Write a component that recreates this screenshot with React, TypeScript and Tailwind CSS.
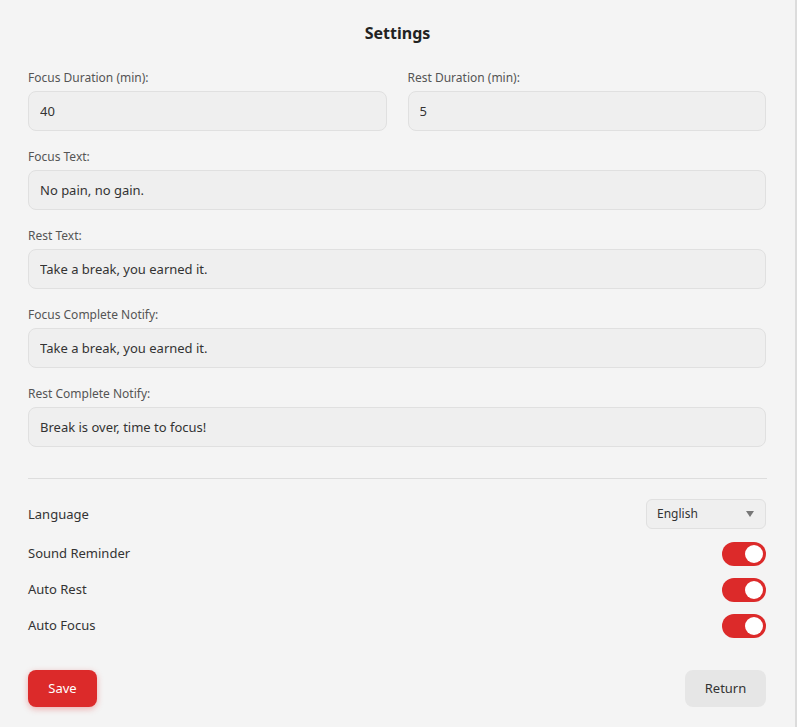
import React, {useState} from 'react';

type FieldProps = {
  label: string;
  value: string;
  onChange: (value: string) => void;
};

function Field({label, value, onChange}: FieldProps) {
  return (
    <div className="flex flex-1 flex-col">
      <label className="mb-[5px] text-[12px] leading-[16px] text-[#555]">{label}</label>
      <input
        className="h-[40px] w-full rounded-[8px] border border-[#e0e0e0] bg-[#efefef] px-[11px] text-[13px] text-[#333] outline-none"
        value={value}
        onChange={e => onChange(e.target.value)}
      />
    </div>
  );
}

function Toggle({checked, onChange}: {checked: boolean; onChange: (v: boolean) => void}) {
  return (
    <button
      onClick={() => onChange(!checked)}
      className={
        'flex h-[24px] w-[44px] items-center rounded-full px-[3px] ' +
        (checked ? 'justify-end bg-[#dc2a2a]' : 'justify-start bg-[#ccc]')
      }>
      <span className="h-[18px] w-[18px] rounded-full bg-white" />
    </button>
  );
}

export default function App() {
  const [settings, setSettings] = useState({
    focus: '40',
    rest: '5',
    focusText: 'No pain, no gain.',
    restText: 'Take a break, you earned it.',
    focusNotify: 'Take a break, you earned it.',
    restNotify: 'Break is over, time to focus!',
    language: 'en',
    sound: true,
    autoRest: true,
    autoFocus: true,
  });

  const set = (field: string, value: string | boolean) => {
    setSettings({...settings, [field]: value});
  };

  return (
    <div
      className="min-h-[727px] border-r-2 border-[#dcdcdc] bg-[#f4f4f4] px-[28px] pt-[22px]"
      style={{fontFamily: '"Noto Sans", "Open Sans", sans-serif'}}>
      <h1 className="text-center text-[16px] font-bold leading-[22px] text-[#222]">Settings</h1>

      <div className="mt-[26px] flex flex-col gap-[18px] pr-[1px]">
        <div className="flex gap-[21px]">
          <Field label="Focus Duration (min):" value={settings.focus} onChange={v => set('focus', v)} />
          <Field label="Rest Duration (min):" value={settings.rest} onChange={v => set('rest', v)} />
        </div>
        <Field label="Focus Text:" value={settings.focusText} onChange={v => set('focusText', v)} />
        <Field label="Rest Text:" value={settings.restText} onChange={v => set('restText', v)} />
        <Field
          label="Focus Complete Notify:"
          value={settings.focusNotify}
          onChange={v => set('focusNotify', v)}
        />
        <Field
          label="Rest Complete Notify:"
          value={settings.restNotify}
          onChange={v => set('restNotify', v)}
        />
      </div>

      <div className="mt-[31px] border-t border-[#dddddd] pr-[1px] pt-[20px]">
        <div className="flex h-[30px] items-center justify-between">
          <span className="pt-[2px] text-[13px] text-[#333]">Language</span>
          <div className="relative">
            <select
              value={settings.language}
              onChange={e => set('language', e.target.value)}
              className="h-[30px] w-[120px] appearance-none rounded-[6px] border border-[#e0e0e0] bg-[#efefef] px-[10px] text-[12px] text-[#333] outline-none">
              <option value="en">English</option>
              <option value="zh">中文</option>
            </select>
            <span className="pointer-events-none absolute right-[12px] top-[12px] h-0 w-0 border-x-[4px] border-t-[6px] border-x-transparent border-t-[#777]" />
          </div>
        </div>

        <div className="mt-[13px] flex h-[24px] items-center justify-between">
          <span className="text-[13px] text-[#333]">Sound Reminder</span>
          <Toggle checked={settings.sound} onChange={v => set('sound', v)} />
        </div>
        <div className="mt-[12px] flex h-[24px] items-center justify-between">
          <span className="text-[13px] text-[#333]">Auto Rest</span>
          <Toggle checked={settings.autoRest} onChange={v => set('autoRest', v)} />
        </div>
        <div className="mt-[12px] flex h-[24px] items-center justify-between">
          <span className="text-[13px] text-[#333]">Auto Focus</span>
          <Toggle checked={settings.autoFocus} onChange={v => set('autoFocus', v)} />
        </div>

        <div className="mt-[32px] flex items-center justify-between">
          <button className="h-[37px] w-[69px] rounded-[8px] bg-[#dc2a2a] text-[13px] text-white shadow-[0_2px_6px_rgba(220,42,42,0.35)]">
            Save
          </button>
          <button className="h-[37px] w-[81px] rounded-[8px] bg-[#e6e6e6] text-[13px] text-[#333]">
            Return
          </button>
        </div>
      </div>
    </div>
  );
}
